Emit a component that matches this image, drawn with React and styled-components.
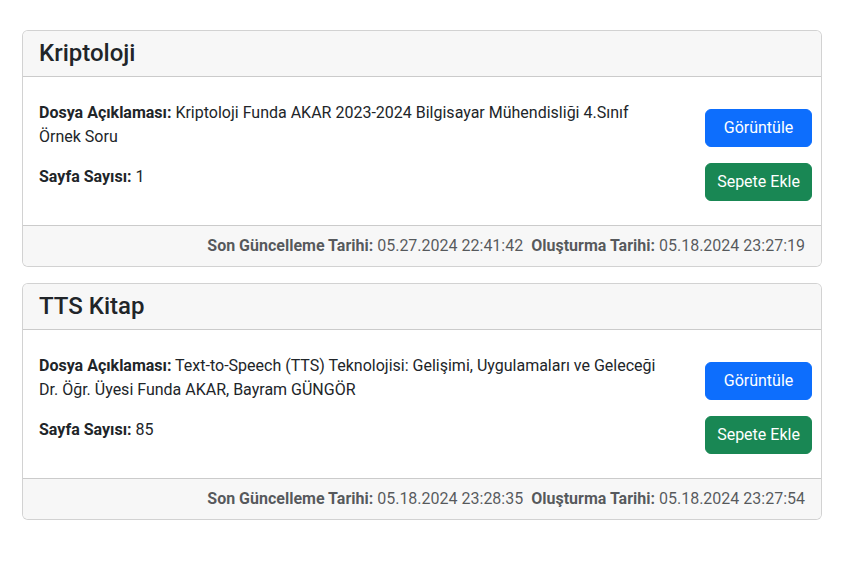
import React from "react";
import styled, { createGlobalStyle } from "styled-components";

const Global = createGlobalStyle`
  html, body { margin: 0; padding: 0; background: #fff; }
  body {
    font-family: Roboto, "Open Sans", sans-serif;
    font-size: 16px;
    line-height: 1.5;
    color: #212529;
  }
  * { box-sizing: border-box; }
`;

const Page = styled.div`
  padding: 30px 0 40px 22px;
  width: 822px;
`;

const Card = styled.section`
  width: 800px;
  border: 1px solid rgba(0, 0, 0, 0.175);
  border-radius: 6px;
  margin-bottom: 16px;
  overflow: hidden;
  background: #fff;
`;

const Header = styled.div`
  background: #f7f7f7;
  padding: 8px 16px;
  border-bottom: 1px solid rgba(0, 0, 0, 0.175);
`;

const Title = styled.h4`
  margin: 0;
  font-size: 24px;
  font-weight: 500;
  line-height: 1.2;
`;

const Body = styled.div`
  display: flex;
  justify-content: space-between;
  align-items: flex-start;
  padding: 24px 9px 16px 16px;
`;

const Info = styled.div`
  width: 634px;
`;

const Para = styled.p`
  margin: 0 0 16px;
`;

const Label = styled.strong`
  font-weight: 700;
`;

const Actions = styled.div`
  display: flex;
  flex-direction: column;
  gap: 16px;
  margin: 8px 0;
  width: 107px;
`;

const Button = styled.button`
  font-family: inherit;
  font-size: 16px;
  line-height: 1.5;
  padding: 6px 0;
  width: 100%;
  border: 1px solid ${(p) => p.$bg};
  background: ${(p) => p.$bg};
  color: #fff;
  border-radius: 6px;
  cursor: pointer;
`;

const Footer = styled.div`
  background: #f7f7f7;
  border-top: 1px solid rgba(0, 0, 0, 0.175);
  padding: 8px 16px;
  text-align: right;
  color: rgba(33, 37, 41, 0.75);
`;

const Gap = styled.span`
  display: inline-block;
  width: 8px;
`;

const items = [
  {
    title: "Kriptoloji",
    desc: "Kriptoloji Funda AKAR 2023-2024 Bilgisayar Mühendisliği 4.Sınıf Örnek Soru",
    pages: "1",
    updated: "05.27.2024 22:41:42",
    created: "05.18.2024 23:27:19",
  },
  {
    title: "TTS Kitap",
    desc: "Text-to-Speech (TTS) Teknolojisi: Gelişimi, Uygulamaları ve Geleceği Dr. Öğr. Üyesi Funda AKAR, Bayram GÜNGÖR",
    pages: "85",
    updated: "05.18.2024 23:28:35",
    created: "05.18.2024 23:27:54",
  },
];

export default function App() {
  return (
    <>
      <Global />
      <Page>
        {items.map((it) => (
          <Card key={it.title}>
            <Header>
              <Title>{it.title}</Title>
            </Header>
            <Body>
              <Info>
                <Para>
                  <Label>Dosya Açıklaması:</Label> {it.desc}
                </Para>
                <Para>
                  <Label>Sayfa Sayısı:</Label> {it.pages}
                </Para>
              </Info>
              <Actions>
                <Button $bg="#0d6efd">Görüntüle</Button>
                <Button $bg="#198754">Sepete Ekle</Button>
              </Actions>
            </Body>
            <Footer>
              <Label>Son Güncelleme Tarihi:</Label> {it.updated}
              <Gap />
              <Label>Oluşturma Tarihi:</Label> {it.created}
            </Footer>
          </Card>
        ))}
      </Page>
    </>
  );
}
